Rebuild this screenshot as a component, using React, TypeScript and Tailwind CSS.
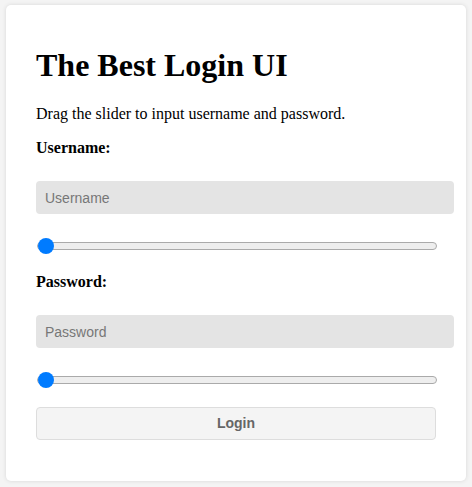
import React, { useState } from 'react';

const serif = { fontFamily: '"Liberation Serif", serif' };

const sliderClass =
  "block w-[400px] h-2 ml-[1px] appearance-none bg-[#eeeeee] border border-[#aaaaaa] rounded-full outline-none cursor-pointer " +
  "[&::-webkit-slider-thumb]:appearance-none [&::-webkit-slider-thumb]:w-4 [&::-webkit-slider-thumb]:h-4 " +
  "[&::-webkit-slider-thumb]:rounded-full [&::-webkit-slider-thumb]:bg-[#007bff] [&::-webkit-slider-thumb]:border-0 " +
  "[&::-moz-range-thumb]:w-4 [&::-moz-range-thumb]:h-4 [&::-moz-range-thumb]:rounded-full [&::-moz-range-thumb]:bg-[#007bff] [&::-moz-range-thumb]:border-0";

const inputClass =
  "block w-[418px] h-[33px] px-[9px] rounded-[4px] bg-[#e4e4e4] text-[14px] text-[#333] placeholder:text-[#777777] outline-none font-['Liberation_Sans',sans-serif]";

export default function App() {
  const [user, setUser] = useState(0);
  const [pass, setPass] = useState(0);

  return (
    <div className="min-h-[487px] bg-[#f4f4f4] px-[6px] pt-[5px] pb-[6px]" style={serif}>
      <div className="bg-white rounded-[5px] shadow-[0_0_4px_rgba(0,0,0,0.12)] px-[30px] pt-[21px] pb-[41px]">
        <h1 className="text-[32px] font-bold leading-[normal] my-[21px]">The Best Login UI</h1>
        <p className="text-[16px] leading-[normal] mb-4">Drag the slider to input username and password.</p>

        <label className="block text-[16px] font-bold leading-[normal]">Username:</label>
        <input className={inputClass + " mt-[24px]"} placeholder="Username" readOnly />
        <div className="mt-[28px] mb-[23px]">
          <input type="range" min={0} max={100} value={user} onChange={e => setUser(+e.target.value)} className={sliderClass} />
        </div>

        <label className="block text-[16px] font-bold leading-[normal]">Password:</label>
        <input className={inputClass + " mt-[24px]"} placeholder="Password" type="password" readOnly />
        <div className="mt-[28px] mb-[23px]">
          <input type="range" min={0} max={100} value={pass} onChange={e => setPass(+e.target.value)} className={sliderClass} />
        </div>

        <button className="block w-[400px] h-[33px] rounded-[4px] bg-[#f4f4f4] border border-[#dddddd] text-[14px] font-bold text-[#666] font-['Liberation_Sans',sans-serif]">
          Login
        </button>
      </div>
    </div>
  );
}
